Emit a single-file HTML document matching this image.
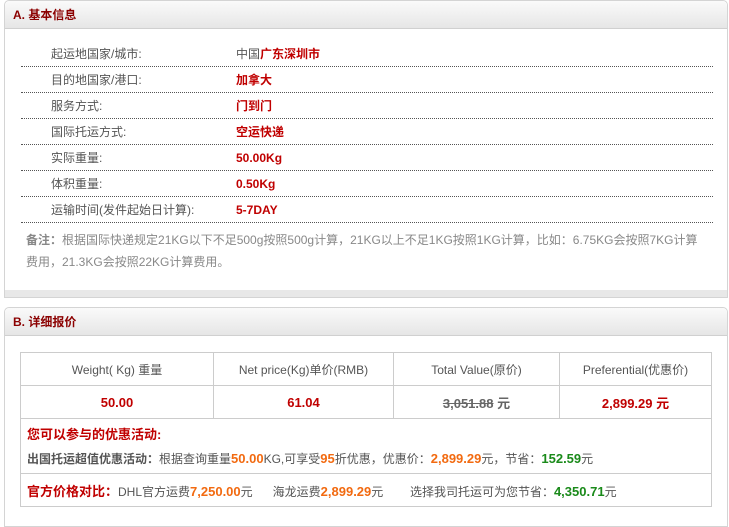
<!DOCTYPE html>
<html><head><meta charset="utf-8"><style>
*{margin:0;padding:0;box-sizing:border-box}
body{width:729px;height:519px;background:#fff;font-family:"Liberation Sans","Noto Sans CJK SC",sans-serif;font-size:12px;color:#444;position:relative;overflow:hidden}
.panel{position:absolute;left:4px;width:724px;border:1px solid #d4d4d4;border-radius:5px 5px 0 0;background:#fff}
.hd{height:28px;background:linear-gradient(#fafafa,#e6e6e6);border-bottom:1px solid #d0d0d0;border-radius:5px 5px 0 0;color:#8b0000;font-weight:bold;font-size:12px;line-height:28px;padding-left:8px}
.row{position:absolute;left:16px;width:692px;height:26px;border-bottom:1px dotted #555;line-height:26px}
.row .l{position:absolute;left:30px;color:#555}
.row .v{position:absolute;left:215px;color:#c00000;font-weight:bold}
.note{position:absolute;left:21px;top:228px;width:682px;color:#888;line-height:22px}
.band{position:absolute;left:0;right:0;bottom:0;height:7px;background:#e8e8e8}
table{position:absolute;left:15px;top:44px;width:692px;border-collapse:collapse}
td{border:1px solid #ccc;text-align:center;color:#555}
.r1 td{height:33px}
.r2 td{height:33px;color:#c00000;font-weight:bold;font-size:13px}
.red{color:#c00000}.or{color:#f26a10;font-weight:bold;font-size:13px}.gr{color:#1a8a1a;font-weight:bold;font-size:13px}
</style></head><body>
<div class="panel" style="top:0;height:298px">
<div class="hd">A. 基本信息</div>
<div class="row" style="top:40px"><span class="l">起运地国家/城市:</span><span class="v"><span style="color:#555;font-weight:normal">中国</span>广东深圳市</span></div>
<div class="row" style="top:66px"><span class="l">目的地国家/港口:</span><span class="v">加拿大</span></div>
<div class="row" style="top:92px"><span class="l">服务方式:</span><span class="v">门到门</span></div>
<div class="row" style="top:118px"><span class="l">国际托运方式:</span><span class="v">空运快递</span></div>
<div class="row" style="top:144px"><span class="l">实际重量:</span><span class="v">50.00Kg</span></div>
<div class="row" style="top:170px"><span class="l">体积重量:</span><span class="v">0.50Kg</span></div>
<div class="row" style="top:196px"><span class="l">运输时间(发件起始日计算):</span><span class="v">5-7DAY</span></div>
<div class="note"><b>备注：</b>根据国际快递规定21KG以下不足500g按照500g计算，21KG以上不足1KG按照1KG计算，比如：6.75KG会按照7KG计算<br>费用，21.3KG会按照22KG计算费用。</div>
<div class="band"></div>
</div>
<div class="panel" style="top:307px;height:220px">
<div class="hd">B. 详细报价</div>
<table>
<tr class="r1"><td style="width:193px">Weight( Kg) 重量</td><td style="width:180px">Net price(Kg)单价(RMB)</td><td style="width:166px">Total Value(原价)</td><td>Preferential(优惠价)</td></tr>
<tr class="r2"><td>50.00</td><td>61.04</td><td style="color:#666"><s>3,051.88</s> 元</td><td>2,899.29 元</td></tr>
<tr><td colspan="4" style="text-align:left;height:55px;padding-left:6px;line-height:24px;padding-top:2px">
<b class="red" style="font-size:13px">您可以参与的优惠活动:</b><br>
<b>出国托运超值优惠活动：</b>根据查询重量<span class="or">50.00</span>KG,可享受<span class="or">95</span>折优惠，优惠价：<span class="or">2,899.29</span>元，节省：<span class="gr">152.59</span>元</td></tr>
<tr><td colspan="4" style="text-align:left;height:33px;padding-left:6px"><b class="red" style="font-size:13px">官方价格对比：</b>DHL官方运费<span class="or">7,250.00</span>元 &nbsp; &nbsp; &nbsp;海龙运费<span class="or">2,899.29</span>元 &nbsp; &nbsp; &nbsp; &nbsp;选择我司托运可为您节省：<span class="gr">4,350.71</span>元</td></tr>
</table>
</div>
</body></html>
